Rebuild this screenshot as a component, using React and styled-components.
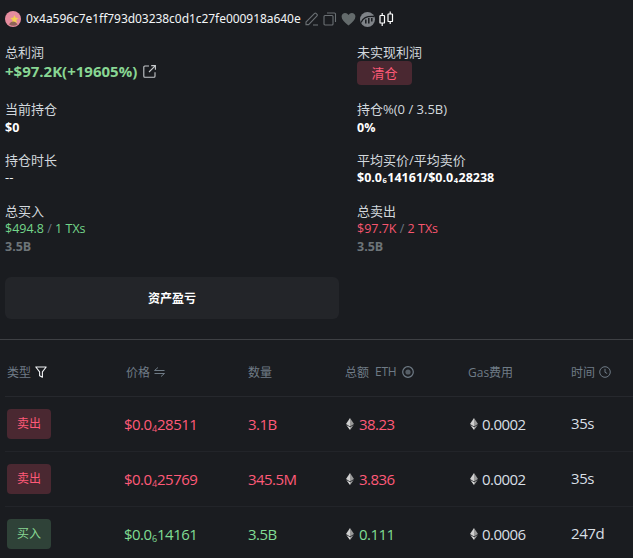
import React from "react";
import styled, { createGlobalStyle } from "styled-components";

const Global = createGlobalStyle`
  html, body { margin: 0; padding: 0; background: #1a1c20; }
  body { font-family: "Open Sans", "Noto Sans CJK SC", sans-serif; width: 633px; height: 558px; overflow: hidden; }
`;
const Page = styled.div`
  width: 633px; height: 558px; overflow: hidden; background: #1a1c20; color: #e8ebee;
`;
const Header = styled.div`
  display: flex; align-items: center; height: 38px; padding-left: 5px;
`;
const Address = styled.span`
  font-size: 12px; line-height: 18px; color: #f2f5f7; margin: 0 4px 0 5px; width: 275px; white-space: nowrap;
  font-family: "Noto Sans", "Open Sans", sans-serif; letter-spacing: -0.05px;
`;
const Tools = styled.div`
  display: flex; align-items: center; gap: 4px;
`;
const Stats = styled.div`
  display: grid; grid-template-columns: 352px 1fr; padding: 5px 0 0 5px; row-gap: 14px;
`;
const Stat = styled.div`
  display: flex; flex-direction: column; align-items: flex-start;
`;
const Label = styled.div`
  font-size: 13px; line-height: 18px; color: #d2d8dd;
`;
const Strong = styled.div`
  font-size: 12.5px; line-height: ${p => (p.$tall ? "19px" : "18px")}; font-weight: 700; color: #fff;
  white-space: nowrap;
`;
const Plain = styled.div`
  font-size: 13px; line-height: 17px; color: #f0f2f4;
`;
const Profit = styled.div`
  display: flex; align-items: center; gap: 6px; font-size: 15px; line-height: 20px; font-weight: 700; color: #88d693;
`;
const ClearTag = styled.div`
  width: 55px; height: 24px; border-radius: 4px; background: #4a2831; color: #ff5a78;
  font-size: 13px; line-height: 24px; text-align: center; margin-bottom: 1px;
`;
const Trade = styled.div`
  font-size: 12.5px; line-height: 18px; color: ${p => (p.$up ? "#74d68a" : "#f8566f")};
`;
const Slash = styled.span`
  color: #6b7580;
`;
const Amount = styled.div`
  font-size: 12.5px; line-height: 18px; font-weight: 700; color: #6d7478;
`;
const Sub = styled.span`
  font-size: 0.6em; position: relative; top: 0.18em; margin: 0 0.5px;
`;
const AssetButton = styled.div`
  margin: 21px 0 0 5px; width: 334px; height: 42px; border-radius: 6px; background: #232529;
  color: #fff; font-size: 12px; font-weight: 700; display: flex; align-items: center; justify-content: center;
`;
const Divider = styled.div`
  height: 1px; background: #3e4044; margin-top: 20px;
`;
const Table = styled.div`
  padding: 0 0 0 5px;
`;
const Row = styled.div`
  display: grid; grid-template-columns: 119px 122px 97px 123px 103px 1fr; padding-left: 2px;
  height: ${p => (p.$head ? "57px" : "55px")}; align-items: center;
  border-bottom: 1px solid ${p => (p.$head ? "#26282d" : "#222429")}; box-sizing: border-box;
`;
const Head = styled.div`
  display: flex; align-items: center; gap: ${p => p.$gap || 4}px; font-size: 12px; color: #6f7b86;
  padding-top: 8px;
`;
const EthLabel = styled.span`
  font-size: 12px; position: relative; top: -1px; letter-spacing: -0.3px;
`;
const Badge = styled.div`
  width: 44px; height: 30px; border-radius: 4px; font-size: 12px; line-height: 30px; text-align: center;
  background: ${p => (p.$up ? "#2f4238" : "#4a2831")}; color: ${p => (p.$up ? "#88d693" : "#ff5a78")};
`;
const Cell = styled.div`
  font-size: 15px; letter-spacing: -0.55px; display: flex; align-items: center; gap: 5px;
  color: ${p => (p.$tone === "up" ? "#80dc94" : p.$tone === "down" ? "#ff5a78" : "#d8dfe5")};
`;
const PriceCell = styled(Cell)`
  margin-left: -2px;
`;
const TotalCell = styled(Cell)`
  margin-left: 1px;
`;
const GasCell = styled(Cell)`
  margin-left: 2px; gap: 4px;
`;
const Time = styled.div`
  font-size: 15px; letter-spacing: -0.4px; color: #d8dfe5; margin-top: -3px;
`;

const Avatar = () => (
  <svg width="16" height="16" viewBox="0 0 16 16">
    <circle cx="8" cy="8" r="8" fill="#e68c9e" />
    <path d="M9.500 4l1.100 2.800 2.900.3-2.200 2 .7 3-2.500-1.500-2.600 1.500.7-3-2.200-2 2.900-.3z" fill="#f3d050" />
    <path d="M4 13.500c1-2 2.500-3 4-3s3.500 1 4.500 3a8 8 0 0 1-8.500 0z" fill="#6b4f3a" opacity=".7" />
  </svg>
);
const Pencil = () => (
  <svg width="14" height="14" viewBox="0 0 14 14" fill="none" stroke="#6a6f73" strokeWidth="1.100">
    <path d="M1 12.600V10L9.600 1.400a1 1 0 0 1 1.400 0l1 1a1 1 0 0 1 0 1.400L3.600 12.600z" />
    <path d="M8 13h5" />
  </svg>
);
const CopyIcon = () => (
  <svg width="14" height="14" viewBox="0 0 14 14" fill="none" stroke="#6a6f73" strokeWidth="1.100">
    <rect x="1" y="3.500" width="9" height="9.500" rx="1" />
    <path d="M4 1h7.500a1 1 0 0 1 1 1v8" />
  </svg>
);
const HeartIcon = () => (
  <svg width="15" height="14" viewBox="0 0 15 14">
    <path d="M7.500 13.400C3 10 .6 7.600.6 4.600.6 2.400 2.300 1 4.100 1c1.400 0 2.600.7 3.400 2 .8-1.300 2-2 3.400-2 1.800 0 3.500 1.400 3.500 3.600 0 3-2.400 5.400-6.900 8.800z" fill="#646b6c" />
  </svg>
);
const ChartLogo = () => (
  <svg width="15" height="15" viewBox="0 0 15 15">
    <circle cx="7.500" cy="7.500" r="7.500" fill="#7f8388" />
    <path d="M1 10.500C3 6 6 3.800 14.500 4.500" fill="none" stroke="#1a1c20" strokeWidth="1.300" />
    <path d="M5.800 7.500v4M8.800 6v5.500M11.800 6v3.500" stroke="#1a1c20" strokeWidth="1.500" />
  </svg>
);
const Candles = () => (
  <svg width="15" height="16" viewBox="0 0 15 16" fill="none" stroke="#fff" strokeWidth="1.200">
    <rect x="1" y="4.500" width="4.500" height="7.500" rx=".6" />
    <path d="M3.200 2v2.500M3.200 12v3" />
    <rect x="9" y="3" width="4.500" height="7.500" rx=".6" />
    <path d="M11.200 .5V3M11.200 10.500V13" />
  </svg>
);
const LinkOut = () => (
  <svg width="13" height="13" viewBox="0 0 13 13" fill="none" stroke="#c5c8cb" strokeWidth="1.100">
    <path d="M6 1H1.800a1 1 0 0 0-1 1v9.200a1 1 0 0 0 1 1H11a1 1 0 0 0 1-1V7.200" />
    <path d="M6 7L12.200 .8M8.200 .6h4.200v4.200" />
  </svg>
);
const Funnel = () => (
  <svg width="12" height="12" viewBox="0 0 12 12" fill="none" stroke="#f0f2f4" strokeWidth="1.100">
    <path d="M.8 1h10.400L7.400 5.800v5.400l-2.800-1.400V5.800z" strokeLinejoin="round" />
  </svg>
);
const Swap = () => (
  <svg width="11" height="10" viewBox="0 0 11 10" fill="none" stroke="#6f7b86" strokeWidth="1">
    <path d="M10.500 3.500H.5L4 .5M.5 6.500h10L7 9.500" />
  </svg>
);
const Refresh = () => (
  <svg width="12" height="12" viewBox="0 0 12 12" fill="none">
    <circle cx="6" cy="6" r="5.300" stroke="#6f7b86" strokeWidth="1.200" />
    <circle cx="6" cy="6" r="2.600" fill="#565e66" />
  </svg>
);
const Clock = () => (
  <svg width="12" height="12" viewBox="0 0 12 12" fill="none" stroke="#6f7b86" strokeWidth="1">
    <circle cx="6" cy="6" r="5.300" />
    <path d="M6 2.800V6.300L8.200 7.500" />
  </svg>
);
const Eth = () => (
  <svg width="8" height="12" viewBox="0 0 8 12">
    <path d="M4 0L0 6.100 4 8.400z" fill="#d0d0d0" />
    <path d="M4 0L8 6.100 4 8.400z" fill="#9a9a9a" />
    <path d="M4 9.200L.3 7 4 12z" fill="#e2e2e2" />
    <path d="M4 9.200L7.700 7 4 12z" fill="#a8a8a8" />
  </svg>
);

const rows = [
  { side: "卖出", up: false, zeros: "4", rest: "28511", qty: "3.1B", total: "38.23", gas: "0.0002", time: "35s" },
  { side: "卖出", up: false, zeros: "4", rest: "25769", qty: "345.5M", total: "3.836", gas: "0.0002", time: "35s" },
  { side: "买入", up: true, zeros: "6", rest: "14161", qty: "3.5B", total: "0.111", gas: "0.0006", time: "247d" },
];

export default function App() {
  return (
    <Page>
      <Global />
      <Header>
        <Avatar />
        <Address>0x4a596c7e1ff793d03238c0d1c27fe000918a640e</Address>
        <Tools>
          <Pencil />
          <CopyIcon />
          <HeartIcon />
          <ChartLogo />
          <Candles />
        </Tools>
      </Header>
      <Stats>
        <Stat>
          <Label>总利润</Label>
          <Profit>+$97.2K(+19605%) <LinkOut /></Profit>
        </Stat>
        <Stat>
          <Label>未实现利润</Label>
          <ClearTag>清仓</ClearTag>
        </Stat>
        <Stat>
          <Label>当前持仓</Label>
          <Strong $tall>$0</Strong>
        </Stat>
        <Stat>
          <Label>持仓%(0 / 3.5B)</Label>
          <Strong $tall>0%</Strong>
        </Stat>
        <Stat>
          <Label>持仓时长</Label>
          <Plain>--</Plain>
        </Stat>
        <Stat>
          <Label>平均买价/平均卖价</Label>
          <Strong>$0.0<Sub>6</Sub>14161/$0.0<Sub>4</Sub>28238</Strong>
        </Stat>
        <Stat>
          <Label>总买入</Label>
          <Trade $up>$494.8 <Slash>/</Slash> 1 TXs</Trade>
          <Amount>3.5B</Amount>
        </Stat>
        <Stat>
          <Label>总卖出</Label>
          <Trade>$97.7K <Slash>/</Slash> 2 TXs</Trade>
          <Amount>3.5B</Amount>
        </Stat>
      </Stats>
      <AssetButton>资产盈亏</AssetButton>
      <Divider />
      <Table>
        <Row $head>
          <Head>类型 <Funnel /></Head>
          <Head>价格 <Swap /></Head>
          <Head>数量</Head>
          <Head $gap={6}>总额 <EthLabel>ETH</EthLabel> <Refresh /></Head>
          <Head>Gas费用</Head>
          <Head>时间 <Clock /></Head>
        </Row>
        {rows.map((r, i) => {
          const tone = r.up ? "up" : "down";
          return (
            <Row key={i}>
              <Badge $up={r.up}>{r.side}</Badge>
              <PriceCell $tone={tone}><span>$0.0<Sub>{r.zeros}</Sub>{r.rest}</span></PriceCell>
              <Cell $tone={tone}>{r.qty}</Cell>
              <TotalCell $tone={tone}><Eth />{r.total}</TotalCell>
              <GasCell><Eth />{r.gas}</GasCell>
              <Time>{r.time}</Time>
            </Row>
          );
        })}
      </Table>
    </Page>
  );
}
